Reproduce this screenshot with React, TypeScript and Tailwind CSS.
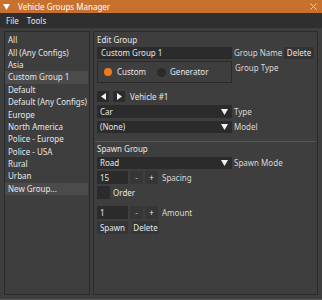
import React from "react";

const Down = () => (
  <svg width="7" height="6" viewBox="0 0 7 6" className="shrink-0">
    <path d="M0 0H7L3.5 6Z" fill="#f2f2f2" />
  </svg>
);

export default function App() {
  const items = [
    "All",
    "All (Any Configs)",
    "Asia",
    "Custom Group 1",
    "Default",
    "Default (Any Configs)",
    "Europe",
    "North America",
    "Police - Europe",
    "Police - USA",
    "Rural",
    "Urban",
  ];
  return (
    <div className="w-[322px] h-[300px] bg-[#3e3e3e] flex flex-col text-[8px] leading-none text-[#e6e6e6] font-['Noto_Sans',sans-serif] overflow-hidden">
      {/* title bar */}
      <div className="h-[13px] shrink-0 bg-[#c8712f] flex items-center pl-[3px] pr-[5px]">
        <svg width="7" height="6" viewBox="0 0 7 6">
          <path d="M0 0H7L3.5 6Z" fill="#ffffff" />
        </svg>
        <span className="ml-[8px] text-white">Vehicle Groups Manager</span>
        <svg width="7" height="7" viewBox="0 0 7 7" className="ml-auto">
          <path d="M0.5 0.5L6.5 6.5M6.5 0.5L0.5 6.5" stroke="#f3d9c4" strokeWidth="1" />
        </svg>
      </div>
      {/* menu bar */}
      <div className="h-[15px] shrink-0 bg-[#2f2f2f] flex items-center gap-[8px] pl-[6px]">
        <span>File</span>
        <span>Tools</span>
      </div>
      {/* content */}
      <div className="flex-1 flex gap-[3px] px-[4px] pt-[3px] pb-[4px] border-b border-[#555555]">
        {/* left list */}
        <div className="w-[86px] shrink-0 flex flex-col border border-[#2a2a2a] pt-[2px]">
          {items.map((it) => (
            <div
              key={it}
              className={
                "h-[12.4px] flex items-center pl-[3px] mr-[1px] whitespace-nowrap " +
                (it === "Custom Group 1" ? "bg-[#4b4b4b]" : "")
              }
            >
              {it}
            </div>
          ))}
          <div className="h-[12.4px] flex items-center pl-[3px] mr-[1px] bg-[#4b4b4b]">New Group...</div>
        </div>
        {/* right panel */}
        <div className="flex-1 flex flex-col border border-[#2a2a2a] pt-[2px] px-[3px]">
          <div className="h-[12px] flex items-center">Edit Group</div>
          <div className="mt-[1px] h-[12px] flex items-center">
            <div className="w-[135px] h-full bg-[#2b2b2b] flex items-center pl-[4px]">Custom Group 1</div>
            <span className="ml-[2px] w-[50px] text-[#d8d8d8]">Group Name</span>
            <div className="w-[30px] h-full bg-[#333333] flex items-center justify-center">Delete</div>
          </div>
          <div className="mt-[2px] flex items-start">
            <div className="w-[135px] h-[22px] border border-[#2a2a2a] flex items-center pl-[6px]">
              <div className="w-[8px] h-[8px] rounded-full bg-[#f07a1e]" />
              <span className="ml-[5px]">Custom</span>
              <div className="ml-[11px] w-[9px] h-[9px] rounded-full bg-[#2b2b2b]" />
              <span className="ml-[4px]">Generator</span>
            </div>
            <span className="ml-[3px] h-[12px] flex items-center mt-[1px] text-[#d8d8d8]">Group Type</span>
          </div>
          <div className="mt-[8px] h-[11px] flex items-center">
            <div className="w-[12px] h-full bg-[#2b2b2b] flex items-center justify-center">
              <svg width="5" height="7" viewBox="0 0 5 7">
                <path d="M5 0V7L0 3.5Z" fill="#f2f2f2" />
              </svg>
            </div>
            <div className="ml-[4px] w-[12px] h-full bg-[#2b2b2b] flex items-center justify-center">
              <svg width="5" height="7" viewBox="0 0 5 7">
                <path d="M0 0V7L5 3.5Z" fill="#f2f2f2" />
              </svg>
            </div>
            <span className="ml-[5px]">Vehicle #1</span>
          </div>
          <div className="mt-[3px] h-[13px] flex items-center">
            <div className="w-[135px] h-full bg-[#2b2b2b] flex items-center pl-[3px] pr-[4px]">
              <span className="flex-1">Car</span>
              <Down />
            </div>
            <span className="ml-[2px] text-[#d8d8d8]">Type</span>
          </div>
          <div className="mt-[3px] h-[12px] flex items-center">
            <div className="w-[135px] h-full bg-[#2b2b2b] flex items-center pl-[3px] pr-[4px]">
              <span className="flex-1">(None)</span>
              <Down />
            </div>
            <span className="ml-[2px] text-[#d8d8d8]">Model</span>
          </div>
          <div className="mt-[8px] -mx-[2px] h-[1px] bg-[#565656]" />
          <div className="mt-[1px] h-[12px] flex items-center">Spawn Group</div>
          <div className="mt-[2px] h-[12px] flex items-center">
            <div className="w-[135px] h-full bg-[#2b2b2b] flex items-center pl-[3px] pr-[4px]">
              <span className="flex-1">Road</span>
              <Down />
            </div>
            <span className="ml-[2px] text-[#d8d8d8]">Spawn Mode</span>
          </div>
          <div className="mt-[2px] h-[13px] flex items-center">
            <div className="w-[31px] h-full bg-[#2b2b2b] flex items-center pl-[3px]">15</div>
            <div className="ml-[2px] w-[13px] h-full bg-[#363636] flex items-center justify-center text-[#bbbbbb]">-</div>
            <div className="ml-[2px] w-[13px] h-full bg-[#363636] flex items-center justify-center">+</div>
            <span className="ml-[4px] text-[#d8d8d8]">Spacing</span>
          </div>
          <div className="mt-[2px] h-[13px] flex items-center">
            <div className="w-[13px] h-full bg-[#2b2b2b]" />
            <span className="ml-[3px]">Order</span>
          </div>
          <div className="mt-[7px] h-[13px] flex items-center">
            <div className="w-[31px] h-full bg-[#2b2b2b] flex items-center pl-[3px]">1</div>
            <div className="ml-[2px] w-[13px] h-full bg-[#363636] flex items-center justify-center text-[#bbbbbb]">-</div>
            <div className="ml-[2px] w-[13px] h-full bg-[#363636] flex items-center justify-center">+</div>
            <span className="ml-[4px] text-[#d8d8d8]">Amount</span>
          </div>
          <div className="mt-[2px] h-[13px] flex items-center">
            <div className="w-[31px] h-full bg-[#353535] flex items-center justify-center">Spawn</div>
            <div className="ml-[4px] w-[27px] h-full bg-[#353535] flex items-center justify-center">Delete</div>
          </div>
        </div>
      </div>
    </div>
  );
}
